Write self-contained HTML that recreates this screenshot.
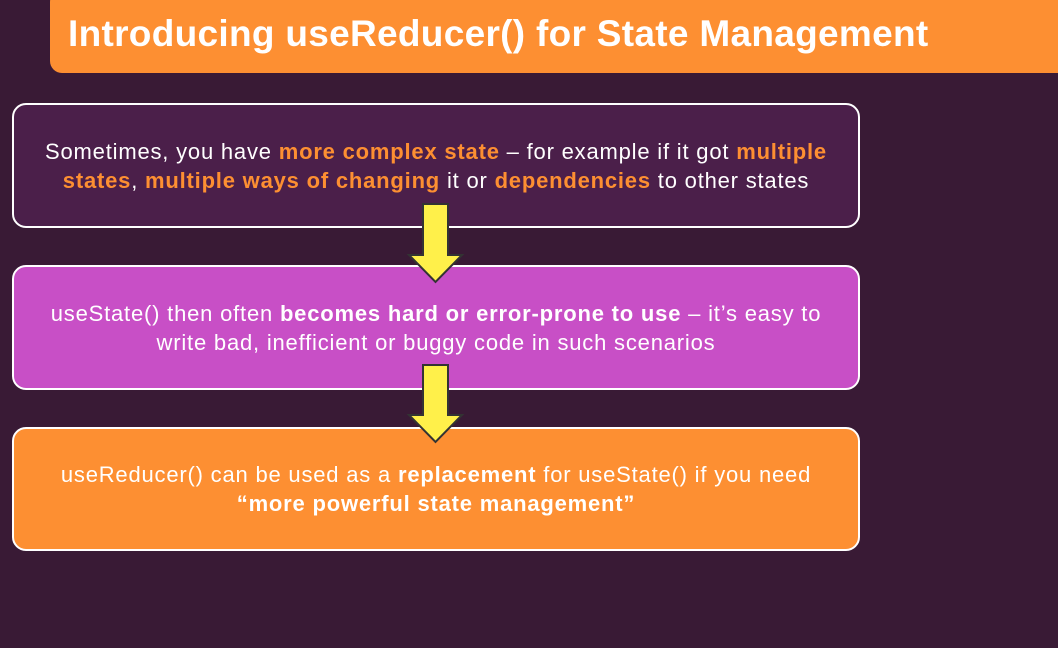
<!DOCTYPE html><html><head><style>
body{margin:0;width:1058px;height:648px;background:#391a35;font-family:"Liberation Sans",sans-serif;position:relative;overflow:hidden}
.hd{position:absolute;left:50px;top:-10px;width:1020px;height:83px;background:#fd8f32;border-radius:12px}
.hd span{position:absolute;left:18px;top:23px;color:#fff;font-weight:bold;font-size:37px;letter-spacing:0.3px;white-space:nowrap}
.b{position:absolute;left:12px;width:848px;border:2px solid #fff;border-radius:14px;display:flex;align-items:center;justify-content:center;text-align:center;color:#fff;font-size:22px;letter-spacing:0.8px;line-height:29px;box-sizing:border-box;white-space:nowrap}
.o{color:#fd8f32;font-weight:bold}
</style></head><body>
<div class="hd"><span>Introducing useReducer() for State Management</span></div>
<div class="b" style="top:103px;height:125px;background:#4b1f4a"><span>Sometimes, you have <b class="o">more complex state</b> – for example if it got <b class="o">multiple</b><br><b class="o">states</b>, <b class="o">multiple ways of changing</b> it or <b class="o">dependencies</b> to other states</span></div>
<div class="b" style="top:265px;height:125px;background:#c84fc6"><span>useState() then often <b>becomes hard or error-prone to use</b> – it’s easy to<br>write bad, inefficient or buggy code in such scenarios</span></div>
<div class="b" style="top:427px;height:124px;background:#fd8f32"><span>useReducer() can be used as a <b>replacement</b> for useState() if you need<br><b>“more powerful state management”</b></span></div>
<svg style="position:absolute;left:0;top:0" width="1058" height="648">
<polygon points="423,204 448,204 448,255 462,255 435.5,282 409,255 423,255" fill="#fff04a" stroke="#333" stroke-width="2"/>
<polygon points="423,365 448,365 448,415 462,415 435.5,442 409,415 423,415" fill="#fff04a" stroke="#333" stroke-width="2"/>
</svg>
</body></html>
